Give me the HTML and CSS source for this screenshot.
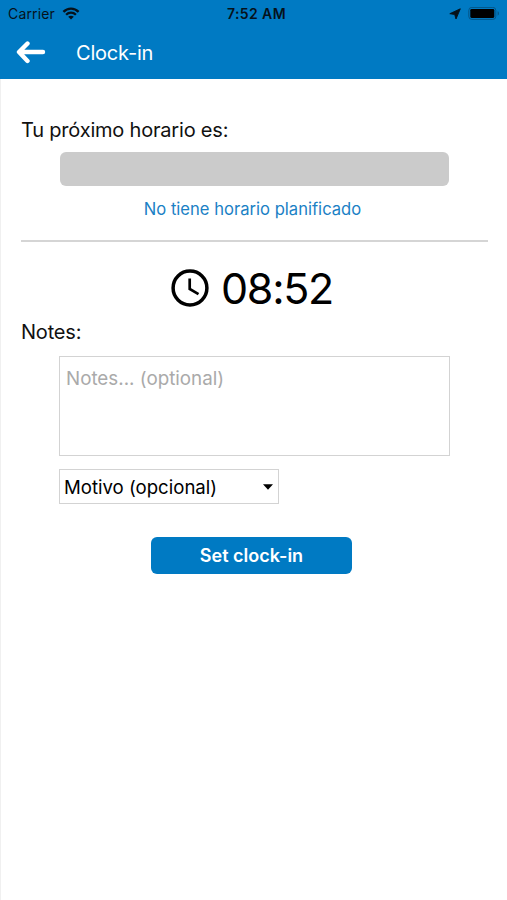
FILE: index.html
```html
<!DOCTYPE html>
<html lang="es">
<head>
<meta charset="utf-8">
<title>Clock-in</title>
<link rel="stylesheet" href="styles.css">
</head>
<body>
<header class="header">
  <div class="status">
    <div class="status-left">
      <span class="carrier">Carrier</span>
      <svg class="wifi" width="18" height="13" viewBox="0 0 18 13" fill="none" stroke="#06121b" stroke-width="2.3">
        <path d="M1.400 4.900C5.700.5 12.300.5 16.600 4.900"/>
        <path d="M4.100 7.800c2.800-2.800 7-2.800 9.800 0"/>
        <path d="M9 12.500L6.200 9.800c1.600-1.500 4-1.500 5.600 0z" fill="#06121b" stroke="none"/>
      </svg>
    </div>
    <span class="time">7:52 AM</span>
    <div class="status-right">
      <svg width="12" height="12" viewBox="0 0 12 12"><path d="M11.300.8L7 11 5.700 6.500.8 5.700z" fill="#06121b" stroke="#06121b" stroke-width=".9" stroke-linejoin="round"/></svg>
      <svg width="32" height="14" viewBox="0 0 32 14">
        <rect x=".8" y=".4" width="27" height="12" rx="3" fill="none" stroke="#035587" stroke-width="1"/>
        <rect x="2.300" y="1.900" width="24" height="9" rx="1.300" fill="#000"/>
        <path d="M29.600 4.300c1.800.6 1.800 3.800 0 4.400z" fill="#035587"/>
      </svg>
    </div>
  </div>
  <div class="nav">
    <svg class="back" width="30" height="24" viewBox="0 0 30 24" fill="none" stroke="#fff" stroke-width="4.400" stroke-linecap="round" stroke-linejoin="round">
      <path d="M11.500 2.500L3 11l8.500 9M3.500 11H27"/>
    </svg>
    <h1 class="title">Clock-in</h1>
  </div>
</header>
<main class="content">
  <p class="label schedule-label"><span>Tu próximo horario es:</span></p>
  <div class="schedule-bar"></div>
  <p class="schedule-empty">No tiene horario planificado</p>
  <hr class="divider">
  <div class="clock">
    <svg width="38" height="38" viewBox="0 0 38 38" fill="none" stroke="#000">
      <circle cx="19" cy="19" r="16.900" stroke-width="3.500"/>
      <path d="M18.700 9.500V20l8.800 5.100" stroke-width="2.700"/>
    </svg>
    <span class="clock-time">08:52</span>
  </div>
  <p class="label notes-label"><span>Notes:</span></p>
  <div class="notes-box"><span>Notes... (optional)</span></div>
  <div class="select">
    <span class="select-text">Motivo (opcional)</span>
    <svg width="10" height="6" viewBox="0 0 10 6"><path d="M0 .3h10L5 5.800z" fill="#000"/></svg>
  </div>
  <div class="button"><span>Set clock-in</span></div>
</main>
</body>
</html>
```
FILE: styles.css
```css
* { box-sizing: border-box; }
body {
  margin: 0;
  min-height: 900px;
  background: #fff;
  color: #111;
  font-family: Inter, "Liberation Sans", sans-serif;
  display: flex;
  flex-direction: column;
}
p, h1 { margin: 0; font-weight: 400; white-space: nowrap; }
span { white-space: nowrap; }
.header { height: 79px; background: #007ac3; }
.status {
  height: 27px;
  display: grid;
  grid-template-columns: 1fr auto 1fr;
  align-items: center;
  padding: 0 7px 0 8px;
  color: #06121b;
  font-size: 14px;
}
.status-left { display: flex; align-items: center; gap: 7px; }
.carrier { letter-spacing: .15px; }
.status-right { display: flex; align-items: center; justify-content: flex-end; gap: 7px; }
.time { font-weight: 600; letter-spacing: .4px; padding-left: 5px; }
.nav { height: 52px; display: flex; align-items: center; padding-left: 16px; gap: 30px; }
.title { color: #fff; font-size: 20px; line-height: 52px; letter-spacing: -.2px; }
.content {
  flex: 1;
  border-left: 1px solid #f0f0f0;
  padding: 37px 19px 0 20px;
  display: flex;
  flex-direction: column;
}
.label { font-size: 20px; line-height: 28px; letter-spacing: -.2px; }
.schedule-bar { height: 34px; margin: 8px 39px 0; border-radius: 6px; background: #cbcbcb; }
.schedule-empty { margin-top: 11px; padding-right: 4px; line-height: 24px; font-size: 16.600px; text-align: center; color: #1b81c5; }
.divider { width: 100%; height: 2px; margin: 19px 0 0; border: 0; background: #d5d5d5; }
.clock { height: 62px; margin-top: 15px; display: flex; align-items: center; gap: 12px; padding-left: 150px; color: #000; }
.clock-time { font-size: 43px; line-height: 62px; letter-spacing: -1.300px; }
.notes-label { margin-top: -1px; }
.notes-box { height: 100px; margin: 10px 38px 0; padding: 9px 6px; border: 1px solid #d3d3d3; font-size: 18.800px; line-height: 26px; color: #aaa; }
.select {
  width: 220px; height: 35px; margin: 13px 0 0 38px; padding: 0 5px 0 4px;
  border: 1px solid #d3d3d3; display: flex; align-items: center; justify-content: space-between;
  color: #000; font-size: 18.600px;
}
.button {
  width: 201px; height: 37px; margin: 33px 0 0 130px; border-radius: 6px;
  display: flex; align-items: center; justify-content: center;
  background: #007ac3; color: #fff; font-size: 18px; font-weight: 600;
}
```
